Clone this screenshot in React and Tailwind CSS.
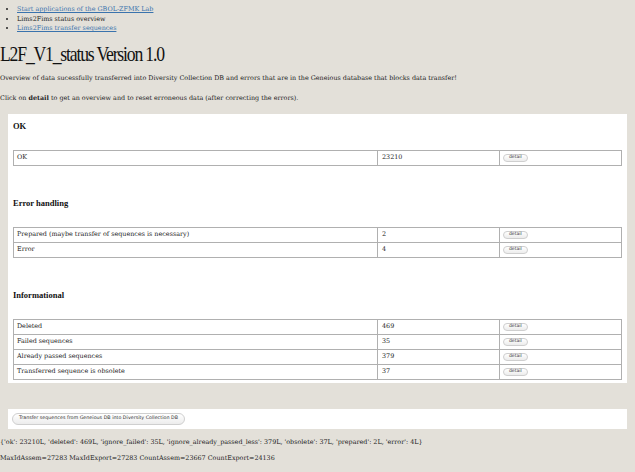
import React from 'react';

const groups = [
  { title: 'OK', rows: [['OK', '23210']] },
  {
    title: 'Error handling',
    rows: [
      ['Prepared (maybe transfer of sequences is necessary)', '2'],
      ['Error', '4'],
    ],
  },
  {
    title: 'Informational',
    rows: [
      ['Deleted', '469'],
      ['Failed sequences', '35'],
      ['Already passed sequences', '379'],
      ['Transferred sequence is obsolete', '37'],
    ],
  },
];

function DetailButton() {
  return (
    <button className="block h-[8px] px-[5px] rounded-full border border-[#cfcfcf] bg-gradient-to-b from-white to-[#ececec] text-[4.5px] leading-none text-[#333] font-['DejaVu_Sans',sans-serif]">
      detail
    </button>
  );
}

function Group({ title, rows, first }) {
  return (
    <div>
      {/* titel + abstand wie im original */}
      <h3 className={`font-['Liberation_Serif',serif] font-bold text-[8.5px] leading-[10px] text-[#111] ${first ? 'pt-[7px]' : 'pt-[32px]'} pb-[19px]`}>
        {title}
      </h3>
      <table className="w-full border-collapse border border-[#aaaaaa]">
        <tbody>
          {rows.map(([label, count]) => (
            <tr key={label}>
              <td className="w-[364px] h-[15px] p-0 pl-[3px] border border-[#b0b0b0] text-[6.4px] leading-[13px] align-middle">{label}</td>
              <td className="w-[122px] h-[15px] p-0 pl-[4px] border border-[#b0b0b0] text-[6.4px] leading-[13px] align-middle">{count}</td>
              <td className="h-[15px] p-0 pl-[3px] border border-[#b0b0b0] align-middle">
                <DetailButton />
              </td>
            </tr>
          ))}
        </tbody>
      </table>
    </div>
  );
}

export default function App() {
  return (
    <div className="min-h-[472px] bg-[#e3e0d9] text-[#222] font-['DejaVu_Serif',serif] text-[6.4px]">
      <ul className="list-disc pl-[17px] pt-[5px] leading-[9.5px] marker:text-[#222]">
        <li><a href="#" className="text-[#3a73ad] underline">Start applications of the GBOL-ZFMK Lab</a></li>
        <li>Lims2Fims status overview</li>
        <li><a href="#" className="text-[#3a73ad] underline">Lims2Fims transfer sequences</a></li>
      </ul>

      <h1 className="mt-[9px] origin-left scale-x-[0.84] font-['Liberation_Serif',serif] text-[21px] leading-[22px] tracking-[-1.4px] text-[#111]">
        L2F_V1_status Version 1.0
      </h1>

      <p className="mt-[9px] leading-[8px]">
        Overview of data sucessfully transferred into Diversity Collection DB and errors that are in the Geneious database that blocks data transfer!
      </p>
      <p className="mt-[12px] leading-[8px]">
        Click on <b>detail</b> to get an overview and to reset erroneous data (after correcting the errors).
      </p>

      <div className="mx-[8px] mt-[12px] bg-white px-[5px] pb-[3px]">
        {groups.map((g, i) => (
          <Group key={g.title} {...g} first={i === 0} />
        ))}
      </div>

      <div className="mx-[8px] mt-[26px] bg-white px-[4px] py-[4px] flex">
        <button className="h-[12px] px-[6px] rounded-full border border-[#cfcfcf] bg-gradient-to-b from-white to-[#ececec] text-[4.8px] leading-none text-[#333] font-['DejaVu_Sans',sans-serif]">
          Transfer sequences from Geneious DB into Diversity Collection DB
        </button>
      </div>

      <p className="mt-[9px] leading-[8px]">
        {"{'ok': 23210L, 'deleted': 469L, 'ignore_failed': 35L, 'ignore_already_passed_less': 379L, 'obsolete': 37L, 'prepared': 2L, 'error': 4L}"}
      </p>
      <p className="mt-[8px] leading-[8px]">
        MaxIdAssem=27283 MaxIdExport=27283 CountAssem=23667 CountExport=24136
      </p>
    </div>
  );
}
